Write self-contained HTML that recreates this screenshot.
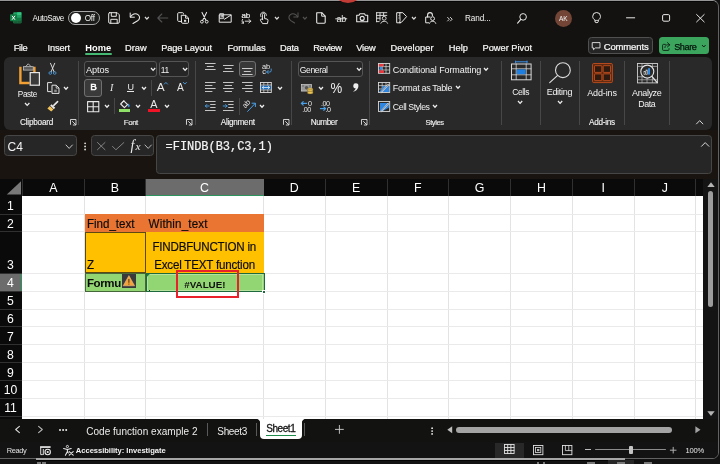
<!DOCTYPE html>
<html>
<head>
<meta charset="utf-8">
<title>Excel</title>
<style>
html,body{margin:0;padding:0;}
body{width:720px;height:464px;overflow:hidden;background:#111;font-family:"Liberation Sans",sans-serif;position:relative;color:#fff;}
#win{position:absolute;left:-8px;top:0;width:727px;height:458.6px;background:#131210;border:1px solid #626262;border-right-width:1.6px;border-top-color:#969696;border-radius:6.5px;box-sizing:border-box;overflow:hidden;}
#w{position:absolute;left:7px;top:-1px;width:720px;height:464px;will-change:transform;}
.a{position:absolute;}
.t{position:absolute;white-space:nowrap;line-height:1;color:#fff;}
svg{position:absolute;overflow:visible;}
</style>
</head>
<body>
<div id="win"><div id="w">
<!--title-->
<div class="a" style="left:0px;top:1px;width:718px;height:0.8px;background:#060606"></div>
<svg style="left:9.5px;top:12.3px" width="11.6" height="11.4" viewBox="0 0 11.6 11.4" ><rect x="3.2" y="0.2" width="8.2" height="11" rx="0.9" fill="#21a366"/><rect x="7.2" y="0.2" width="4.2" height="2.8" fill="#33c481"/><rect x="7.2" y="3" width="4.2" height="2.7" fill="#21a366"/><rect x="7.2" y="5.7" width="4.2" height="2.7" fill="#107c41"/><rect x="3.2" y="5.7" width="4" height="5.5" fill="#185c37"/><rect x="7.2" y="8.4" width="4.2" height="2.8" fill="#185c37"/><rect x="0" y="2.3" width="7" height="7" rx="0.7" fill="#107c41"/><path d="M2 3.8L5 7.8M5 3.8L2 7.8" stroke="#fff" stroke-width="1" fill="none"/></svg>
<div class="t" style="left:32.50px;top:15.00px;font-size:8.14px;color:#f6f6f6;letter-spacing:-0.500px;">AutoSave</div>
<div class="a" style="left:68.4px;top:10.8px;width:31.7px;height:14.7px;border:1px solid #a8a8a8;border-radius:8px;box-sizing:border-box;background:#1c1c1a"></div>
<div class="a" style="left:70.9px;top:12.9px;width:10.4px;height:10.4px;background:#fff;border-radius:6px"></div>
<div class="t" style="left:84.80px;top:15.00px;font-size:8.2px;color:#f2f2f2;letter-spacing:-0.291px;">Off</div>
<svg style="left:108px;top:12px" width="12" height="12" viewBox="0 0 12 12" ><path d="M1.5 0.7H9.2L11.3 2.8V10A1.3 1.3 0 0 1 10 11.3H2A1.3 1.3 0 0 1 0.7 10V1.5A0.8 0.8 0 0 1 1.5 0.7Z" fill="none" stroke="#e8e8e8" stroke-width="1" stroke-linecap="round" stroke-linejoin="round" /><path d="M3.3 0.9V4.3H8.3V0.9" fill="none" stroke="#e8e8e8" stroke-width="1" stroke-linecap="round" stroke-linejoin="round" /><path d="M2.8 11.2V7.3H9.2V11.2" fill="none" stroke="#e8e8e8" stroke-width="1" stroke-linecap="round" stroke-linejoin="round" /></svg>
<svg style="left:129px;top:12px" width="12" height="12" viewBox="0 0 12 12" ><path d="M1.2 1V5.2H5.4" fill="none" stroke="#e8e8e8" stroke-width="1" stroke-linecap="round" stroke-linejoin="round" /><path d="M1.4 5.1C3 2.2 6.5 0.8 9 2.6C11.3 4.3 11 7.2 8.6 8.8L4 11.5" fill="none" stroke="#e8e8e8" stroke-width="1.1" stroke-linecap="round" stroke-linejoin="round" /></svg>
<svg style="left:143.71px;top:15.95px" width="5.78" height="4.1"><path d="M1 1L2.89 3.1L4.78 1" fill="none" stroke="#ddd" stroke-width="1.25" stroke-linecap="butt" stroke-linejoin="miter"/></svg>
<svg style="left:157px;top:13px" width="12" height="10" viewBox="0 0 12 10" ><path d="M0.8 5H10.8M4.8 1L0.8 5L4.8 9" fill="none" stroke="#525252" stroke-width="1.1" stroke-linecap="round" stroke-linejoin="round" /></svg>
<svg style="left:177px;top:12px" width="13" height="12" viewBox="0 0 13 12" ><path d="M6.5 2V1.6A1 1 0 0 0 5.5 0.7H1.6A1 1 0 0 0 0.7 1.6V8.5A1 1 0 0 0 1.6 9.4H4" fill="none" stroke="#e8e8e8" stroke-width="1" stroke-linecap="round" stroke-linejoin="round" /><path d="M4.6 3.3H8.7L11.5 6V10.4A1 1 0 0 1 10.5 11.3H5.5A1 1 0 0 1 4.6 10.4Z" fill="none" stroke="#e8e8e8" stroke-width="1" stroke-linecap="round" stroke-linejoin="round" /><path d="M8.6 3.4V6.2H11.3" fill="none" stroke="#e8e8e8" stroke-width="1" stroke-linecap="round" stroke-linejoin="round" /><rect x="7" y="7.8" width="2.2" height="2" fill="#ddd"/></svg>
<svg style="left:199.6px;top:12.4px" width="8.6" height="12" viewBox="0 0 8.6 12" ><path d="M2 0.4L5.9 8.2M6.6 0.4L2.7 8.2" fill="none" stroke="#e8e8e8" stroke-width="1.05" stroke-linecap="round" stroke-linejoin="round" /><circle cx="1.9" cy="9.7" r="1.4" fill="none" stroke="#e8e8e8" stroke-width="0.95"/><circle cx="6.7" cy="9.7" r="1.4" fill="none" stroke="#e8e8e8" stroke-width="0.95"/></svg>
<svg style="left:218.7px;top:12.6px" width="13" height="10" viewBox="0 0 13 10" ><path d="M0.6 1.8H12.2V9.2H0.6Z" fill="none" stroke="#e8e8e8" stroke-width="1" stroke-linecap="round" stroke-linejoin="round" /><path d="M11.8 2.2L5.5 6.2" fill="none" stroke="#e8e8e8" stroke-width="1" stroke-linecap="round" stroke-linejoin="round" /><path d="M1.2 0.6H4.6V5.6H1.2Z M2.3 2.2V4.2M3.5 2.2V4.2" fill="none" stroke="#e8e8e8" stroke-width="0.8" stroke-linecap="round" stroke-linejoin="round" /></svg>
<svg style="left:240.5px;top:12.3px" width="11" height="12" viewBox="0 0 11 12" ><text x="0.4" y="5.8" style="font-family:'Liberation Sans',sans-serif;font-size:8px;letter-spacing:-0.2px" fill="#ececec" stroke="#ececec" stroke-width="0.2">ab</text><path d="M1.6 7.3C0.6 8.6 0.9 10.2 2.4 11M2.4 11L0.9 11.2M2.4 11L2.3 9.6" fill="none" stroke="#e8e8e8" stroke-width="0.9" stroke-linecap="round" stroke-linejoin="round" /><path d="M4.2 9.2H9.8M7.8 7.4L9.9 9.2L7.8 11" fill="none" stroke="#e8e8e8" stroke-width="0.9" stroke-linecap="round" stroke-linejoin="round" /></svg>
<svg style="left:259px;top:12px" width="10" height="12.5" viewBox="0 0 10 12.5" ><path d="M3.4 5.6V2.4A1.1 1.1 0 0 1 5.6 2.4V6.5L8 7.1A1.3 1.3 0 0 1 9 8.6L8.4 11.6H3.6L1.4 8.2A0.9 0.9 0 0 1 2.8 7.2L3.4 7.8Z" fill="none" stroke="#e8e8e8" stroke-width="1" stroke-linecap="round" stroke-linejoin="round" /><path d="M1.8 4.6A3 3 0 1 1 7.4 3.4" fill="none" stroke="#e8e8e8" stroke-width="0.9" stroke-linecap="round" stroke-linejoin="round" /></svg>
<svg style="left:273.61px;top:15.95px" width="5.78" height="4.1"><path d="M1 1L2.89 3.1L4.78 1" fill="none" stroke="#ddd" stroke-width="1.25" stroke-linecap="butt" stroke-linejoin="miter"/></svg>
<svg style="left:287.5px;top:12.3px" width="11" height="12" viewBox="0 0 11 12" ><path d="M10 0.8V5H5.8" fill="none" stroke="#525252" stroke-width="1" stroke-linecap="round" stroke-linejoin="round" /><path d="M9.8 4.9C8.2 2 4.7 0.8 2.4 2.6C0.2 4.3 0.5 7 2.8 8.6L6.6 11" fill="none" stroke="#525252" stroke-width="1.1" stroke-linecap="round" stroke-linejoin="round" /></svg>
<svg style="left:302.11px;top:15.95px" width="5.78" height="4.1"><path d="M1 1L2.89 3.1L4.78 1" fill="none" stroke="#525252" stroke-width="1.25" stroke-linecap="butt" stroke-linejoin="miter"/></svg>
<svg style="left:315.6px;top:12.3px" width="10" height="12" viewBox="0 0 10 12" ><path d="M0.7 0.7H5.8L9.2 4.1V10.3A0.9 0.9 0 0 1 8.3 11.2H1.6A0.9 0.9 0 0 1 0.7 10.3Z" fill="none" stroke="#e8e8e8" stroke-width="1.1" stroke-linecap="round" stroke-linejoin="round" /><path d="M5.7 0.9V4.2H9" fill="none" stroke="#e8e8e8" stroke-width="1" stroke-linecap="round" stroke-linejoin="round" /></svg>
<svg style="left:334.6px;top:14px" width="13" height="9" viewBox="0 0 13 9" ><text x="1.5" y="7.6" style="font-family:'Liberation Sans',sans-serif;font-size:9px;letter-spacing:-0.2px" fill="#ececec">ab</text><path d="M0.3 4.8H12.2" stroke="#ececec" stroke-width="0.9"/></svg>
<svg style="left:355.5px;top:13px" width="12.5" height="9.6" viewBox="0 0 12.5 9.6" ><path d="M0.7 2.3H3L3.9 0.7H8.5L9.4 2.3H11.7V8.8H0.7Z" fill="none" stroke="#e8e8e8" stroke-width="1.1" stroke-linecap="round" stroke-linejoin="round" /><circle cx="6.2" cy="5.4" r="2" fill="none" stroke="#e8e8e8" stroke-width="1.1"/></svg>
<svg style="left:376.2px;top:12.3px" width="12" height="11.5" viewBox="0 0 12 11.5" ><path d="M0.6 0.7H10.8M0.6 0.7V9.8M0.6 3.4H10.8M0.6 6.2H4M0.6 9.6H3.2M4 0.9V8.2M7.6 0.9V3.4" fill="none" stroke="#e8e8e8" stroke-width="0.9" stroke-linecap="round" stroke-linejoin="round" /><circle cx="8.2" cy="6.3" r="1.9" fill="#131210" stroke="#e8e8e8" stroke-width="0.9"/><path d="M4.8 11.2C5.2 8.6 11.2 8.6 11.6 11.2" fill="none" stroke="#e8e8e8" stroke-width="0.9" stroke-linecap="round" stroke-linejoin="round" /></svg>
<svg style="left:395.5px;top:12.3px" width="11.5" height="11.5" viewBox="0 0 11.5 11.5" ><path d="M4.2 0.7H0.7V10.8H4.5" fill="none" stroke="#e8e8e8" stroke-width="1" stroke-linecap="round" stroke-linejoin="round" /><path d="M4.2 0.7H6.8L10.6 4.6L5.6 10.2L3.6 10.8L4 8.8Z" fill="none" stroke="#e8e8e8" stroke-width="1" stroke-linecap="round" stroke-linejoin="round" /><path d="M3 3.6V3.7M3 6V6.1" fill="none" stroke="#e8e8e8" stroke-width="1" stroke-linecap="round" stroke-linejoin="round" /></svg>
<svg style="left:410.51px;top:15.95px" width="5.78" height="4.1"><path d="M1 1L2.89 3.1L4.78 1" fill="none" stroke="#ddd" stroke-width="1.25" stroke-linecap="butt" stroke-linejoin="miter"/></svg>
<svg style="left:424.5px;top:12px" width="11.5" height="11.5" viewBox="0 0 11.5 11.5" ><path d="M2.6 5V3A2.4 2.4 0 0 1 7.4 3V3.4" fill="none" stroke="#e8e8e8" stroke-width="1.1" stroke-linecap="round" stroke-linejoin="round" /><path d="M5 5H0.7V10.8H3.6" fill="none" stroke="#e8e8e8" stroke-width="1" stroke-linecap="round" stroke-linejoin="round" /><circle cx="7.6" cy="6.6" r="1.9" fill="none" stroke="#e8e8e8" stroke-width="1"/><path d="M4.4 11.3C4.8 8.6 10.4 8.6 10.8 11.3" fill="none" stroke="#e8e8e8" stroke-width="1" stroke-linecap="round" stroke-linejoin="round" /></svg>
<svg style="left:447.3px;top:17px" width="6" height="4.5" viewBox="0 0 6 4.5" ><path d="M0.6 0.4L2.4 2.2L0.6 4M3.4 0.4L5.2 2.2L3.4 4" fill="none" stroke="#e8e8e8" stroke-width="0.9" stroke-linecap="round" stroke-linejoin="round" /></svg>
<div class="t" style="left:465.00px;top:15.00px;font-size:8.2px;color:#f2f2f2;letter-spacing:-0.118px;">Rand...</div>
<svg style="left:517.3px;top:13px" width="10" height="11" viewBox="0 0 10 11" ><circle cx="6.1" cy="3.9" r="3.3" fill="none" stroke="#e8e8e8" stroke-width="1"/><path d="M3.8 6.4L0.6 10.2" fill="none" stroke="#e8e8e8" stroke-width="1.1" stroke-linecap="round" stroke-linejoin="round" /></svg>
<div class="a" style="left:554.6px;top:9.5px;width:17.4px;height:17.4px;background:#724536;border-radius:9px"></div>
<div class="t" style="left:558.90px;top:16.00px;font-size:6.5px;color:#f4f4f4;">AK</div>
<svg style="left:592px;top:12.3px" width="9.5" height="11.6" viewBox="0 0 9.5 11.6" ><path d="M2.9 8.2C1.4 7 0.7 5.8 0.7 4.4A3.9 3.9 0 0 1 8.5 4.4C8.5 5.8 7.8 7 6.3 8.2V9.4A1.2 1.2 0 0 1 5.1 10.6H4.1A1.2 1.2 0 0 1 2.9 9.4Z" fill="none" stroke="#e8e8e8" stroke-width="1" stroke-linecap="round" stroke-linejoin="round" /><path d="M3 8.4H6.2" fill="none" stroke="#e8e8e8" stroke-width="0.8" stroke-linecap="round" stroke-linejoin="round" /></svg>
<svg style="left:626px;top:17px" width="9.5" height="2" viewBox="0 0 9.5 2" ><path d="M0.5 0.8H8.7" fill="none" stroke="#e8e8e8" stroke-width="1" stroke-linecap="round" stroke-linejoin="round" /></svg>
<svg style="left:661.5px;top:14.2px" width="8.5" height="8" viewBox="0 0 8.5 8" ><rect x="0.6" y="0.6" width="7" height="6.6" rx="1.3" fill="none" stroke="#e8e8e8" stroke-width="1"/></svg>
<svg style="left:696px;top:14px" width="9" height="8.5" viewBox="0 0 9 8.5" ><path d="M0.6 0.5L8.2 7.9M8.2 0.5L0.6 7.9" fill="none" stroke="#e8e8e8" stroke-width="1" stroke-linecap="round" stroke-linejoin="round" /></svg>
<!--menu-->
<div class="t" style="left:13.70px;top:44.00px;font-size:9.3px;color:#f6f6f6;letter-spacing:-0.295px;-webkit-text-stroke:0.22px #f6f6f6;">File</div>
<div class="t" style="left:47.50px;top:44.00px;font-size:9.3px;color:#f6f6f6;letter-spacing:-0.153px;-webkit-text-stroke:0.22px #f6f6f6;">Insert</div>
<div class="t" style="left:125.00px;top:44.00px;font-size:9.3px;color:#f6f6f6;-webkit-text-stroke:0.22px #f6f6f6;">Draw</div>
<div class="t" style="left:161.20px;top:44.00px;font-size:9.3px;color:#f6f6f6;letter-spacing:-0.142px;-webkit-text-stroke:0.22px #f6f6f6;">Page Layout</div>
<div class="t" style="left:227.50px;top:44.00px;font-size:9.3px;color:#f6f6f6;letter-spacing:-0.079px;-webkit-text-stroke:0.22px #f6f6f6;">Formulas</div>
<div class="t" style="left:280.00px;top:44.00px;font-size:9.3px;color:#f6f6f6;letter-spacing:-0.214px;-webkit-text-stroke:0.22px #f6f6f6;">Data</div>
<div class="t" style="left:313.20px;top:44.00px;font-size:9.3px;color:#f6f6f6;letter-spacing:-0.337px;-webkit-text-stroke:0.22px #f6f6f6;">Review</div>
<div class="t" style="left:356.20px;top:44.00px;font-size:9.3px;color:#f6f6f6;letter-spacing:-0.161px;-webkit-text-stroke:0.22px #f6f6f6;">View</div>
<div class="t" style="left:390.50px;top:44.00px;font-size:9.3px;color:#f6f6f6;letter-spacing:0.101px;-webkit-text-stroke:0.22px #f6f6f6;">Developer</div>
<div class="t" style="left:448.70px;top:44.00px;font-size:9.3px;color:#f6f6f6;letter-spacing:0.058px;-webkit-text-stroke:0.22px #f6f6f6;">Help</div>
<div class="t" style="left:482.50px;top:44.00px;font-size:9.3px;color:#f6f6f6;letter-spacing:-0.011px;-webkit-text-stroke:0.22px #f6f6f6;">Power Pivot</div>
<div class="t" style="left:85.30px;top:44.00px;font-size:9.3px;color:#fff;letter-spacing:0.052px;font-weight:bold;">Home</div>
<div class="a" style="left:85.3px;top:53px;width:26.3px;height:1.8px;background:#45b873;border-radius:1px"></div>
<div class="a" style="left:588.2px;top:37.2px;width:64.5px;height:17.2px;background:#252525;border:1px solid #505050;border-radius:3.5px;box-sizing:border-box"></div>
<svg style="left:592px;top:42.3px" width="8.6" height="8.4" viewBox="0 0 8.6 8.4" ><path d="M0.6 0.6H8V5.9H3.4L1.5 7.7V5.9H0.6Z" fill="none" stroke="#e8e8e8" stroke-width="0.9" stroke-linecap="round" stroke-linejoin="round" stroke-linejoin="miter"/></svg>
<div class="t" style="left:603.70px;top:42.00px;font-size:9.5px;color:#f8f8f8;letter-spacing:-0.134px;-webkit-text-stroke:0.22px #f8f8f8;">Comments</div>
<div class="a" style="left:658.7px;top:37.2px;width:50.6px;height:17.2px;background:#3ba55d;border-radius:3.5px"></div>
<svg style="left:662px;top:42px" width="8.6" height="9" viewBox="0 0 8.6 9" ><path d="M3.4 2.4H1.4A0.8 0.8 0 0 0 0.6 3.2V7.6A0.8 0.8 0 0 0 1.4 8.4H6.2A0.8 0.8 0 0 0 7 7.6V6.6" fill="none" stroke="#0d1f14" stroke-width="0.9" stroke-linecap="round" stroke-linejoin="round" /><path d="M5.4 0.6L7.9 2.8L5.4 5M7.7 2.8H5.6C4 2.8 3 3.8 2.9 5.6" fill="none" stroke="#0d1f14" stroke-width="0.9" stroke-linecap="round" stroke-linejoin="round" /></svg>
<div class="t" style="left:674.20px;top:43.00px;font-size:9.14px;color:#07140c;letter-spacing:-0.400px;-webkit-text-stroke:0.25px #07140c;">Share</div>
<svg style="left:701.015px;top:44.2025px" width="5.57" height="3.995"><path d="M1 1L2.785 2.995L4.57 1" fill="none" stroke="#07140c" stroke-width="0.9" stroke-linecap="butt" stroke-linejoin="miter"/></svg>
<!--ribbon-->
<div class="a" style="left:3.6px;top:57.3px;width:708.6px;height:72.8px;background:#292929;border-radius:6px"></div>
<div class="a" style="left:78.1px;top:61px;width:1px;height:64px;background:#474747"></div>
<div class="a" style="left:194.9px;top:61px;width:1px;height:64px;background:#474747"></div>
<div class="a" style="left:291.1px;top:61px;width:1px;height:64px;background:#474747"></div>
<div class="a" style="left:368.8px;top:61px;width:1px;height:64px;background:#474747"></div>
<div class="a" style="left:500.8px;top:61px;width:1px;height:64px;background:#474747"></div>
<div class="a" style="left:539.9px;top:61px;width:1px;height:64px;background:#474747"></div>
<div class="a" style="left:579.0px;top:61px;width:1px;height:64px;background:#474747"></div>
<div class="a" style="left:623.8px;top:61px;width:1px;height:64px;background:#474747"></div>
<div class="a" style="left:668.9px;top:61px;width:1px;height:64px;background:#474747"></div>
<svg style="left:18.5px;top:62.8px" width="21.5" height="23" viewBox="0 0 21.5 23" ><path d="M1.4 3.8V20H10.6M15.4 3.8V9" fill="none" stroke="#f2a033" stroke-width="2.4" stroke-linejoin="miter"/><rect x="4.4" y="3.7" width="9.8" height="3.4" fill="#5a5a5a" stroke="#d0d0d0" stroke-width="0.7"/><path d="M6.6 3.6L9.3 0.8L12 3.6" fill="none" stroke="#d8d8d8" stroke-width="0.8"/><rect x="11.2" y="9.6" width="9.2" height="12.6" fill="#3a3a3a" stroke="#e6e6e6" stroke-width="1.2"/></svg>
<div class="t" style="left:17.80px;top:91.00px;font-size:8.22px;color:#f4f4f4;letter-spacing:-0.400px;">Paste</div>
<svg style="left:23.895000000000003px;top:102.2925px" width="6.41" height="4.415"><path d="M1 1L3.205 3.415L5.41 1" fill="none" stroke="#eee" stroke-width="1.25" stroke-linecap="butt" stroke-linejoin="miter"/></svg>
<svg style="left:49px;top:63.2px" width="7.6" height="12" viewBox="0 0 7.6 12" ><path d="M1.5 0.3L5.1 8.8M5.7 0.3L2.1 8.8" fill="none" stroke="#e8e8e8" stroke-width="0.9" stroke-linecap="round" stroke-linejoin="round" /><circle cx="1.3" cy="10" r="1.35" fill="none" stroke="#4aa0e6" stroke-width="0.8"/><circle cx="5.7" cy="10" r="1.35" fill="none" stroke="#4aa0e6" stroke-width="0.8"/></svg>
<svg style="left:46.6px;top:82px" width="12.6" height="12" viewBox="0 0 12.6 12" ><path d="M5 0.6H0.6V9.6H4.4" fill="none" stroke="#e4e4e4" stroke-width="1"/><path d="M5 3.2H9.2L12 6V11.4H5Z" fill="#2b2b2b" stroke="#e4e4e4" stroke-width="1" stroke-linejoin="miter"/><path d="M9.2 3.4V6.1H11.8" fill="none" stroke="#e4e4e4" stroke-width="0.8"/><rect x="7.2" y="7.6" width="2.6" height="2.4" fill="#8a8a8a"/></svg>
<svg style="left:62.90500000000001px;top:85.5975px" width="5.99" height="4.205"><path d="M1 1L2.995 3.205L4.99 1" fill="none" stroke="#eee" stroke-width="1.25" stroke-linecap="butt" stroke-linejoin="miter"/></svg>
<svg style="left:47px;top:100.8px" width="11.6" height="10.8" viewBox="0 0 11.6 10.8" ><path d="M10.6 0.6L6.8 4.4" fill="none" stroke="#e8e8e8" stroke-width="1.6" stroke-linecap="round" stroke-linejoin="round" /><path d="M4.6 3.2L8.2 6.8L6.8 8.2L3.2 4.6Z" fill="#e8e8e8"/><path d="M2.8 5L6.4 8.6L4.2 10.4L0.4 7.4Z" fill="#f3c35a"/></svg>
<div class="t" style="left:20.00px;top:119.00px;font-size:8.2px;color:#f2f2f2;letter-spacing:-0.218px;-webkit-text-stroke:0.12px #f2f2f2;">Clipboard</div>
<svg style="left:69.6px;top:118.9px" width="6.6" height="6.6" viewBox="0 0 6.6 6.6" ><path d="M0.5 5.4V0.5H6V2.4" fill="none" stroke="#e4e4e4" stroke-width="0.9" stroke-linecap="round" stroke-linejoin="round" /><path d="M2.5 2.5L5.6 5.6M6 3.3V6H3.3" fill="none" stroke="#e4e4e4" stroke-width="0.9" stroke-linecap="round" stroke-linejoin="round" /></svg>
<div class="a" style="left:84.3px;top:60.6px;width:72.5px;height:16.8px;border:1px solid #555;border-radius:3px;box-sizing:border-box;background:#262626"></div>
<div class="a" style="left:158.7px;top:60.6px;width:30.8px;height:16.8px;border:1px solid #555;border-radius:3px;box-sizing:border-box;background:#262626"></div>
<div class="t" style="left:86.00px;top:66.00px;font-size:9.2px;color:#f2f2f2;letter-spacing:-0.075px;">Aptos</div>
<svg style="left:149.9px;top:67.045px" width="6.2" height="4.3100000000000005"><path d="M1 1L3.1 3.3100000000000005L5.2 1" fill="none" stroke="#eee" stroke-width="1.25" stroke-linecap="butt" stroke-linejoin="miter"/></svg>
<div class="t" style="left:160.80px;top:66.00px;font-size:8.47px;color:#f2f2f2;letter-spacing:-0.400px;">11</div>
<svg style="left:182.1px;top:67.045px" width="6.2" height="4.3100000000000005"><path d="M1 1L3.1 3.3100000000000005L5.2 1" fill="none" stroke="#eee" stroke-width="1.25" stroke-linecap="butt" stroke-linejoin="miter"/></svg>
<div class="a" style="left:84.3px;top:79.3px;width:17.5px;height:17.3px;border:1px solid #707070;border-radius:3px;box-sizing:border-box;background:#3a3a3a"></div>
<div class="t" style="left:90.30px;top:82.00px;font-size:9.8px;color:#fff;-webkit-text-stroke:0.45px #fff;">B</div>
<div class="t" style="left:110.00px;top:83.00px;font-size:10px;color:#e8e8e8;font-style:italic;font-family:'Liberation Serif',monospace;">I</div>
<div class="t" style="left:127.50px;top:83.00px;font-size:9px;color:#e8e8e8;">U</div>
<div class="a" style="left:127.3px;top:91.4px;width:6.6px;height:0.9px;background:#e8e8e8"></div>
<svg style="left:141.305px;top:85.5975px" width="5.99" height="4.205"><path d="M1 1L2.995 3.205L4.99 1" fill="none" stroke="#eee" stroke-width="1.25" stroke-linecap="butt" stroke-linejoin="miter"/></svg>
<div class="a" style="left:150.8px;top:79.5px;width:1px;height:16.5px;background:#474747"></div>
<div class="t" style="left:156.70px;top:82.00px;font-size:11.8px;color:#e8e8e8;">A</div>
<svg style="left:164.2px;top:82.3px" width="3.8" height="2.4" viewBox="0 0 3.8 2.4" ><path d="M0.3 2.1L1.9 0.4L3.5 2.1" fill="none" stroke="#4aa0e6" stroke-width="0.9" stroke-linecap="round" stroke-linejoin="round" /></svg>
<div class="t" style="left:177.00px;top:83.00px;font-size:10.2px;color:#e8e8e8;">A</div>
<svg style="left:183.2px;top:82.4px" width="3.8" height="2.6" viewBox="0 0 3.8 2.6" ><path d="M0.4 0.4L1.9 2.1L3.4 0.4" fill="none" stroke="#4aa0e6" stroke-width="0.9" stroke-linecap="round" stroke-linejoin="round" /></svg>
<svg style="left:86.6px;top:100.6px" width="12.4" height="11.4" viewBox="0 0 12.4 11.4" ><path d="M0.6 0.6H11.8V10.8H0.6ZM6.2 0.6V10.8M0.6 5.7H11.8" fill="none" stroke="#e8e8e8" stroke-width="1.1" stroke-linecap="round" stroke-linejoin="round" /></svg>
<svg style="left:104.005px;top:104.2975px" width="5.99" height="4.205"><path d="M1 1L2.995 3.205L4.99 1" fill="none" stroke="#eee" stroke-width="1.25" stroke-linecap="butt" stroke-linejoin="miter"/></svg>
<div class="a" style="left:113.8px;top:97.8px;width:1px;height:16.5px;background:#474747"></div>
<svg style="left:119.5px;top:100.4px" width="10.2" height="8.4" viewBox="0 0 10.2 8.4" ><path d="M3.8 0.8L7.6 4.6L4.4 7.6L0.7 4Z" fill="none" stroke="#e8e8e8" stroke-width="1.15" stroke-linecap="round" stroke-linejoin="round" /><path d="M2.2 2.6L3.8 0.6" fill="none" stroke="#e8e8e8" stroke-width="1" stroke-linecap="round" stroke-linejoin="round" /><path d="M8.6 4.2C8 5.4 8 6.6 8.8 6.8C9.6 6.6 9.4 5.4 8.6 4.2" fill="#4aa0e6" stroke="#4aa0e6" stroke-width="0.8" stroke-linecap="round" stroke-linejoin="round" /></svg>
<div class="a" style="left:118.8px;top:109.3px;width:11.2px;height:3px;background:#8fe066"></div>
<svg style="left:134.905px;top:104.2975px" width="5.99" height="4.205"><path d="M1 1L2.995 3.205L4.99 1" fill="none" stroke="#eee" stroke-width="1.25" stroke-linecap="butt" stroke-linejoin="miter"/></svg>
<div class="t" style="left:150.20px;top:99.00px;font-size:10.8px;color:#e8e8e8;">A</div>
<div class="a" style="left:148px;top:109.3px;width:11.7px;height:3px;background:#f01426"></div>
<svg style="left:164.405px;top:104.2975px" width="5.99" height="4.205"><path d="M1 1L2.995 3.205L4.99 1" fill="none" stroke="#eee" stroke-width="1.25" stroke-linecap="butt" stroke-linejoin="miter"/></svg>
<div class="t" style="left:123.80px;top:119.00px;font-size:7.93px;color:#f2f2f2;letter-spacing:-0.450px;-webkit-text-stroke:0.12px #f2f2f2;">Font</div>
<svg style="left:186.4px;top:118.9px" width="6.6" height="6.6" viewBox="0 0 6.6 6.6" ><path d="M0.5 5.4V0.5H6V2.4" fill="none" stroke="#e4e4e4" stroke-width="0.9" stroke-linecap="round" stroke-linejoin="round" /><path d="M2.5 2.5L5.6 5.6M6 3.3V6H3.3" fill="none" stroke="#e4e4e4" stroke-width="0.9" stroke-linecap="round" stroke-linejoin="round" /></svg>
<svg style="left:204.5px;top:60px" width="10.6" height="18" viewBox="0 0 10.6 18" ><path d="M0 3.5H10.6" stroke="#f0f0f0" stroke-width="0.8"/><path d="M1.8 6.5H8.799999999999999" stroke="#f0f0f0" stroke-width="0.8"/><path d="M0 9.5H10.6" stroke="#f0f0f0" stroke-width="0.8"/></svg>
<svg style="left:223.2px;top:60px" width="10.6" height="18" viewBox="0 0 10.6 18" ><path d="M0 5.5H10.6" stroke="#f0f0f0" stroke-width="0.8"/><path d="M1.8 8.5H8.799999999999999" stroke="#f0f0f0" stroke-width="0.8"/><path d="M0 11.5H10.6" stroke="#f0f0f0" stroke-width="0.8"/></svg>
<div class="a" style="left:239px;top:60.5px;width:16.8px;height:16.8px;border:1px solid #707070;border-radius:3px;box-sizing:border-box;background:#383838"></div>
<svg style="left:242.1px;top:60px" width="10.6" height="18" viewBox="0 0 10.6 18" ><path d="M0 8.5H10.6" stroke="#f0f0f0" stroke-width="0.8"/><path d="M1.8 11.5H8.799999999999999" stroke="#f0f0f0" stroke-width="0.8"/><path d="M0 14.5H10.6" stroke="#f0f0f0" stroke-width="0.8"/></svg>
<svg style="left:262px;top:62.6px" width="10" height="12" viewBox="0 0 10 12" ><text x="0" y="5.8" style="font-family:'Liberation Sans',sans-serif;font-size:7.4px" fill="#eaeaea">ab</text><text x="0.2" y="11" style="font-family:'Liberation Sans',sans-serif;font-size:7.4px" fill="#eaeaea">c</text><path d="M9.2 6V7.6A1.4 1.4 0 0 1 7.8 9H4.8M6.2 7.4L4.6 9L6.2 10.6" fill="none" stroke="#4aa0e6" stroke-width="0.9" stroke-linecap="round" stroke-linejoin="round" /></svg>
<svg style="left:204.5px;top:60px" width="10.6" height="34" viewBox="0 0 10.6 34" ><path d="M0 22.5H10.6" stroke="#f0f0f0" stroke-width="0.8"/><path d="M0 25.5H7.3999999999999995" stroke="#f0f0f0" stroke-width="0.8"/><path d="M0 28.5H10.6" stroke="#f0f0f0" stroke-width="0.8"/><path d="M0 31.5H7.3999999999999995" stroke="#f0f0f0" stroke-width="0.8"/></svg>
<svg style="left:223.2px;top:60px" width="10.6" height="34" viewBox="0 0 10.6 34" ><path d="M0 22.5H10.6" stroke="#f0f0f0" stroke-width="0.8"/><path d="M1.6 25.5H9.0" stroke="#f0f0f0" stroke-width="0.8"/><path d="M0 28.5H10.6" stroke="#f0f0f0" stroke-width="0.8"/><path d="M1.6 31.5H9.0" stroke="#f0f0f0" stroke-width="0.8"/></svg>
<svg style="left:242.1px;top:60px" width="10.6" height="34" viewBox="0 0 10.6 34" ><path d="M0 22.5H10.6" stroke="#f0f0f0" stroke-width="0.8"/><path d="M3.2 25.5H10.6" stroke="#f0f0f0" stroke-width="0.8"/><path d="M0 28.5H10.6" stroke="#f0f0f0" stroke-width="0.8"/><path d="M3.2 31.5H10.6" stroke="#f0f0f0" stroke-width="0.8"/></svg>
<svg style="left:260px;top:81.8px" width="11.8" height="11" viewBox="0 0 11.8 11" ><rect x="0.5" y="0.5" width="10.8" height="10" fill="none" stroke="#e0e0e0" stroke-width="0.9"/><rect x="1" y="3.5" width="9.8" height="4" fill="#1d6fc0"/><path d="M0.6 3H11.2M0.6 8H11.2M3.8 0.6V3M7.8 0.6V3M3.8 8V10.4M7.8 8V10.4" fill="none" stroke="#e0e0e0" stroke-width="0.7" stroke-linecap="round" stroke-linejoin="round" /><path d="M2.4 5.5H9.4M3.6 4.3L2.3 5.5L3.6 6.7M8.2 4.3L9.5 5.5L8.2 6.7" fill="none" stroke="#dff0ff" stroke-width="0.8" stroke-linecap="round" stroke-linejoin="round" /></svg>
<svg style="left:276.905px;top:85.5975px" width="5.99" height="4.205"><path d="M1 1L2.995 3.205L4.99 1" fill="none" stroke="#eee" stroke-width="1.25" stroke-linecap="butt" stroke-linejoin="miter"/></svg>
<svg style="left:204.5px;top:100px" width="10.6" height="11.4" viewBox="0 0 10.6 11.4" ><path d="M0 1.5H10.6" stroke="#f0f0f0" stroke-width="0.8"/><path d="M5.2 4.5H10.6" stroke="#f0f0f0" stroke-width="0.8"/><path d="M5.2 7.5H10.6" stroke="#f0f0f0" stroke-width="0.8"/><path d="M0 10.5H10.6" stroke="#f0f0f0" stroke-width="0.8"/><path d="M0.4 6H4.2M1.8 4.5L0.3 6L1.8 7.5" fill="none" stroke="#4aa0e6" stroke-width="0.9" stroke-linecap="round" stroke-linejoin="round" /></svg>
<svg style="left:223.2px;top:100px" width="10.6" height="11.4" viewBox="0 0 10.6 11.4" ><path d="M0 1.5H10.6" stroke="#f0f0f0" stroke-width="0.8"/><path d="M5.2 4.5H10.6" stroke="#f0f0f0" stroke-width="0.8"/><path d="M5.2 7.5H10.6" stroke="#f0f0f0" stroke-width="0.8"/><path d="M0 10.5H10.6" stroke="#f0f0f0" stroke-width="0.8"/><path d="M0.2 6H4M2.6 4.5L4.1 6L2.6 7.5" fill="none" stroke="#4aa0e6" stroke-width="0.9" stroke-linecap="round" stroke-linejoin="round" /></svg>
<div class="a" style="left:238.8px;top:98px;width:1px;height:16.5px;background:#474747"></div>
<svg style="left:242.6px;top:100px" width="13" height="12" viewBox="0 0 13 12" ><text transform="translate(2.6,8.6) rotate(-50)" style="font-family:'Liberation Sans',sans-serif;font-size:7.4px" fill="#eaeaea">ab</text><path d="M4.6 11.4L12.2 3.4M9 3.2H12.4V6.6" fill="none" stroke="#4aa0e6" stroke-width="1" stroke-linecap="round" stroke-linejoin="round" /></svg>
<svg style="left:258.605px;top:104.2975px" width="5.99" height="4.205"><path d="M1 1L2.995 3.205L4.99 1" fill="none" stroke="#eee" stroke-width="1.25" stroke-linecap="butt" stroke-linejoin="miter"/></svg>
<div class="t" style="left:220.70px;top:119.00px;font-size:8.2px;color:#f2f2f2;letter-spacing:-0.265px;-webkit-text-stroke:0.12px #f2f2f2;">Alignment</div>
<svg style="left:283.4px;top:118.9px" width="6.6" height="6.6" viewBox="0 0 6.6 6.6" ><path d="M0.5 5.4V0.5H6V2.4" fill="none" stroke="#e4e4e4" stroke-width="0.9" stroke-linecap="round" stroke-linejoin="round" /><path d="M2.5 2.5L5.6 5.6M6 3.3V6H3.3" fill="none" stroke="#e4e4e4" stroke-width="0.9" stroke-linecap="round" stroke-linejoin="round" /></svg>
<div class="a" style="left:298.3px;top:60.6px;width:65.2px;height:16.8px;border:1px solid #555;border-radius:3px;box-sizing:border-box;background:#262626"></div>
<div class="t" style="left:299.80px;top:66.00px;font-size:8.61px;color:#f2f2f2;letter-spacing:-0.400px;">General</div>
<svg style="left:356.2px;top:67.045px" width="6.2" height="4.3100000000000005"><path d="M1 1L3.1 3.3100000000000005L5.2 1" fill="none" stroke="#eee" stroke-width="1.25" stroke-linecap="butt" stroke-linejoin="miter"/></svg>
<svg style="left:301px;top:84px" width="12.6" height="10.4" viewBox="0 0 12.6 10.4" ><rect x="0.5" y="0.5" width="10" height="6.6" fill="#9a9a9a" stroke="#e0e0e0" stroke-width="0.6"/><circle cx="5.5" cy="3.8" r="1.7" fill="#555"/><rect x="1.4" y="1.4" width="1.2" height="1.2" fill="#555"/><rect x="8.4" y="1.4" width="1.2" height="1.2" fill="#555"/><ellipse cx="9.2" cy="5.2" rx="3" ry="1.3" fill="#f0c85a" stroke="#5a4a10" stroke-width="0.4"/><ellipse cx="9.2" cy="7" rx="3" ry="1.3" fill="#f0c85a" stroke="#5a4a10" stroke-width="0.4"/><ellipse cx="9.2" cy="8.8" rx="3" ry="1.3" fill="#f0c85a" stroke="#5a4a10" stroke-width="0.4"/></svg>
<svg style="left:317.505px;top:85.5975px" width="5.99" height="4.205"><path d="M1 1L2.995 3.205L4.99 1" fill="none" stroke="#eee" stroke-width="1.25" stroke-linecap="butt" stroke-linejoin="miter"/></svg>
<div class="t" style="left:330.60px;top:82.00px;font-size:13.2px;color:#ededed;transform:scaleY(1.16);transform-origin:50% 85%;">%</div>
<svg style="left:352.2px;top:83.4px" width="6.6" height="9" viewBox="0 0 6.6 9" ><path d="M3.9 0.2A2.5 2.5 0 0 1 6.4 2.9C6.4 5.6 4.2 8 0.8 8.8C2.5 7.7 3.6 6.4 3.7 5.3A2.55 2.55 0 0 1 3.9 0.2Z" fill="#ededed"/></svg>
<svg style="left:301px;top:100.4px" width="12" height="11.8" viewBox="0 0 12 11.8" ><path d="M0.4 3.4H5.6M2.2 1.6L0.3 3.4L2.2 5.2" fill="none" stroke="#4aa0e6" stroke-width="1.1" stroke-linecap="round" stroke-linejoin="round" /><text x="7" y="5.6" style="font-family:'Liberation Sans',sans-serif;font-size:7.2px;letter-spacing:-0.5px" fill="#e8e8e8">0</text><text x="1.2" y="11.7" style="font-family:'Liberation Sans',sans-serif;font-size:7.2px;letter-spacing:-0.5px" fill="#e8e8e8">.00</text></svg>
<svg style="left:319.6px;top:100.4px" width="12.4" height="11.8" viewBox="0 0 12.4 11.8" ><path d="M0.4 8.6H5.6M3.8 6.8L5.7 8.6L3.8 10.4" fill="none" stroke="#4aa0e6" stroke-width="1.1" stroke-linecap="round" stroke-linejoin="round" /><text x="1" y="5.6" style="font-family:'Liberation Sans',sans-serif;font-size:7.2px;letter-spacing:-0.5px" fill="#e8e8e8">.00</text><text x="5.4" y="11.7" style="font-family:'Liberation Sans',sans-serif;font-size:7.2px;letter-spacing:-0.5px" fill="#e8e8e8">.0</text></svg>
<div class="t" style="left:310.80px;top:119.00px;font-size:8.2px;color:#f2f2f2;letter-spacing:-0.445px;-webkit-text-stroke:0.12px #f2f2f2;">Number</div>
<svg style="left:360.6px;top:118.9px" width="6.6" height="6.6" viewBox="0 0 6.6 6.6" ><path d="M0.5 5.4V0.5H6V2.4" fill="none" stroke="#e4e4e4" stroke-width="0.9" stroke-linecap="round" stroke-linejoin="round" /><path d="M2.5 2.5L5.6 5.6M6 3.3V6H3.3" fill="none" stroke="#e4e4e4" stroke-width="0.9" stroke-linecap="round" stroke-linejoin="round" /></svg>
<svg style="left:378px;top:63.4px" width="12.2" height="10.8" viewBox="0 0 12.2 10.8" ><rect x="0.5" y="0.5" width="11.2" height="9.8" fill="none" stroke="#d8d8d8" stroke-width="0.9"/><path d="M0.6 3.6H11.6M0.6 7H11.6M4.2 0.6V10.2M8 0.6V10.2" fill="none" stroke="#d8d8d8" stroke-width="0.7" stroke-linecap="round" stroke-linejoin="round" /><rect x="1" y="1" width="3" height="2.4" fill="#e8373e"/><rect x="1.6" y="4" width="2.6" height="2.6" fill="#3a8ee6"/><rect x="1" y="7.4" width="5" height="2.6" fill="#e8373e"/><rect x="4.4" y="1" width="1.6" height="2.4" fill="#e8373e"/></svg>
<div class="t" style="left:392.80px;top:66.00px;font-size:9.0px;color:#f2f2f2;letter-spacing:-0.097px;">Conditional Formatting</div>
<svg style="left:483.305px;top:66.5975px" width="5.99" height="4.205"><path d="M1 1L2.995 3.205L4.99 1" fill="none" stroke="#eee" stroke-width="1.25" stroke-linecap="butt" stroke-linejoin="miter"/></svg>
<svg style="left:378px;top:82.2px" width="12.2" height="11" viewBox="0 0 12.2 11" ><rect x="0.5" y="0.5" width="11.2" height="10" fill="none" stroke="#d8d8d8" stroke-width="0.9"/><path d="M0.6 3.6H11.6M0.6 7H11.6M4.2 0.6V10.2M8 0.6V10.2" fill="none" stroke="#d8d8d8" stroke-width="0.7" stroke-linecap="round" stroke-linejoin="round" /><path d="M4.6 4H11.2V10H1L4.6 6Z" fill="#2f86e0"/><path d="M3 10.4L10.4 2.6" fill="none" stroke="#e8e8e8" stroke-width="1.5" stroke-linecap="round" stroke-linejoin="round" /><path d="M3 10.4L10.4 2.6" fill="none" stroke="#2b2b2b" stroke-width="0.5" stroke-linecap="round" stroke-linejoin="round" /></svg>
<div class="t" style="left:392.80px;top:84.00px;font-size:9.0px;color:#f2f2f2;letter-spacing:-0.334px;">Format as Table</div>
<svg style="left:454.605px;top:85.3975px" width="5.99" height="4.205"><path d="M1 1L2.995 3.205L4.99 1" fill="none" stroke="#eee" stroke-width="1.25" stroke-linecap="butt" stroke-linejoin="miter"/></svg>
<svg style="left:378px;top:101px" width="12.2" height="11" viewBox="0 0 12.2 11" ><rect x="0.5" y="0.5" width="11.2" height="10" fill="none" stroke="#d8d8d8" stroke-width="0.9"/><path d="M2 2H11V6.4L5 10H2Z" fill="#2f86e0"/><path d="M3 10.4L10.4 2.6" fill="none" stroke="#e8e8e8" stroke-width="1.5" stroke-linecap="round" stroke-linejoin="round" /><path d="M3 10.4L10.4 2.6" fill="none" stroke="#2b2b2b" stroke-width="0.5" stroke-linecap="round" stroke-linejoin="round" /></svg>
<div class="t" style="left:392.80px;top:103.00px;font-size:8.72px;color:#f2f2f2;letter-spacing:-0.400px;">Cell Styles</div>
<svg style="left:432.105px;top:104.0975px" width="5.99" height="4.205"><path d="M1 1L2.995 3.205L4.99 1" fill="none" stroke="#eee" stroke-width="1.25" stroke-linecap="butt" stroke-linejoin="miter"/></svg>
<div class="t" style="left:425.50px;top:119.00px;font-size:7.7px;color:#f2f2f2;letter-spacing:-0.450px;-webkit-text-stroke:0.12px #f2f2f2;">Styles</div>
<svg style="left:510.6px;top:61.3px" width="20.6" height="19.2" viewBox="0 0 20.6 19.2" ><path d="M4.6 0V1.8M16 0V1.8M4.6 0.8H16" fill="none" stroke="#3a8ee6" stroke-width="1" stroke-linecap="round" stroke-linejoin="round" /><rect x="0.5" y="3" width="19.6" height="15.8" fill="none" stroke="#d8d8d8" stroke-width="1"/><path d="M0.6 7.8H20M0.6 13.8H20M5.2 3V18.6M15.2 3V18.6" fill="none" stroke="#d8d8d8" stroke-width="0.8" stroke-linecap="round" stroke-linejoin="round" /><rect x="5.8" y="8.4" width="8.8" height="4.8" fill="#1f7fe0"/></svg>
<div class="t" style="left:512.20px;top:88.00px;font-size:8.5px;color:#f2f2f2;letter-spacing:-0.400px;">Cells</div>
<svg style="left:517.3px;top:100.045px" width="6.2" height="4.3100000000000005"><path d="M1 1L3.1 3.3100000000000005L5.2 1" fill="none" stroke="#eee" stroke-width="1.25" stroke-linecap="butt" stroke-linejoin="miter"/></svg>
<svg style="left:548.6px;top:62px" width="22" height="21.4" viewBox="0 0 22 21.4" ><circle cx="13.9" cy="8.2" r="7.4" fill="none" stroke="#dcdcdc" stroke-width="1.1"/><path d="M8.4 13.6L0.7 20.6" fill="none" stroke="#dcdcdc" stroke-width="1.2" stroke-linecap="round" stroke-linejoin="round" /></svg>
<div class="t" style="left:546.70px;top:88.00px;font-size:9.0px;color:#f2f2f2;letter-spacing:-0.289px;">Editing</div>
<svg style="left:556.5px;top:100.045px" width="6.2" height="4.3100000000000005"><path d="M1 1L3.1 3.3100000000000005L5.2 1" fill="none" stroke="#eee" stroke-width="1.25" stroke-linecap="butt" stroke-linejoin="miter"/></svg>
<svg style="left:592px;top:63.4px" width="20.8" height="20" viewBox="0 0 20.8 20" ><rect x="0.5" y="0.5" width="19.9" height="19.1" rx="1.2" fill="#5c2912" stroke="#c24e1d" stroke-width="0.9"/><rect x="2.5" y="2.7" width="7.3" height="6.7" rx="0.5" fill="#2f1a10" stroke="#d9561f" stroke-width="0.75"/><rect x="2.5" y="10.9" width="7.3" height="6.7" rx="0.5" fill="#2f1a10" stroke="#d9561f" stroke-width="0.75"/><rect x="11.2" y="2.7" width="7.3" height="6.7" rx="0.5" fill="#2f1a10" stroke="#d9561f" stroke-width="0.75"/><rect x="11.2" y="10.9" width="7.3" height="6.7" rx="0.5" fill="#2f1a10" stroke="#d9561f" stroke-width="0.75"/></svg>
<div class="t" style="left:587.20px;top:89.00px;font-size:9.0px;color:#f2f2f2;letter-spacing:-0.119px;">Add-ins</div>
<div class="t" style="left:589.10px;top:119.00px;font-size:8.2px;color:#f2f2f2;letter-spacing:-0.311px;-webkit-text-stroke:0.12px #f2f2f2;">Add-ins</div>
<svg style="left:637px;top:63.4px" width="21" height="20.4" viewBox="0 0 21 20.4" ><rect x="0.5" y="0.5" width="20" height="19.4" fill="none" stroke="#d0d0d0" stroke-width="0.9"/><path d="M0.6 3.4H20.4M0.6 13.8H7M0.6 16.8H20.4M5 0.6V19.6M10 16V19.6M15.4 0.6V3.4M15.4 14V19.6" fill="none" stroke="#bdbdbd" stroke-width="0.7" stroke-linecap="round" stroke-linejoin="round" /><circle cx="10.3" cy="8.6" r="6.5" fill="#2b2b2b" stroke="#e4e4e4" stroke-width="1.1"/><path d="M14.9 13.4L20.2 19.6" fill="none" stroke="#e4e4e4" stroke-width="1.3" stroke-linecap="round" stroke-linejoin="round" /><rect x="7" y="8.6" width="1.3" height="3" fill="none" stroke="#dcdcdc" stroke-width="0.6"/><rect x="9" y="7" width="1.3" height="4.6" fill="none" stroke="#dcdcdc" stroke-width="0.6"/><rect x="11.1" y="5.2" width="1.9" height="6.4" fill="#2f8ff0"/></svg>
<div class="t" style="left:632.10px;top:89.00px;font-size:8.99px;color:#f2f2f2;letter-spacing:-0.400px;">Analyze</div>
<div class="t" style="left:638.30px;top:100.00px;font-size:8.85px;color:#f2f2f2;letter-spacing:-0.400px;">Data</div>
<svg style="left:695.8px;top:120px" width="7.4" height="4.4" viewBox="0 0 7.4 4.4" ><path d="M0.5 3.9L3.7 0.6L6.9 3.9" fill="none" stroke="#d8d8d8" stroke-width="1" stroke-linecap="round" stroke-linejoin="round" /></svg>
<!--formula-->
<div class="a" style="left:0px;top:130px;width:718px;height:49px;background:#19140f"></div>
<div class="a" style="left:4px;top:134.7px;width:72.8px;height:21px;background:#262626;border:1px solid #464646;border-radius:3.5px;box-sizing:border-box"></div>
<div class="t" style="left:7.60px;top:141.00px;font-size:12px;color:#f2f2f2;letter-spacing:0.056px;">C4</div>
<svg style="left:65.39999999999999px;top:143.8px" width="8.4" height="5.4"><path d="M1 1L4.2 4.4L7.4 1" fill="none" stroke="#d8d8d8" stroke-width="0.9" stroke-linecap="round" stroke-linejoin="round"/></svg>
<svg style="left:83.5px;top:141.6px" width="2.2" height="9" viewBox="0 0 2.2 9" ><circle cx="1.1" cy="1.3" r="0.9" fill="#e4e4e4"/><circle cx="1.1" cy="4.4" r="0.9" fill="#e4e4e4"/><circle cx="1.1" cy="7.5" r="0.9" fill="#e4e4e4"/></svg>
<div class="a" style="left:91.3px;top:134.7px;width:62.4px;height:21px;background:#262626;border:1px solid #464646;border-radius:3.5px;box-sizing:border-box"></div>
<svg style="left:96.6px;top:142.2px" width="8.6" height="8.4" viewBox="0 0 8.6 8.4" ><path d="M0.5 0.5L8 7.7M8 0.5L0.5 7.7" fill="none" stroke="#8c8c8c" stroke-width="0.9" stroke-linecap="round" stroke-linejoin="round" /></svg>
<svg style="left:112px;top:142px" width="12.4" height="8.4" viewBox="0 0 12.4 8.4" ><path d="M0.5 4.4L3.9 7.8L11.8 0.6" fill="none" stroke="#8c8c8c" stroke-width="0.9" stroke-linecap="round" stroke-linejoin="round" /></svg>
<div class="t" style="left:130.60px;top:139.00px;font-size:14px;color:#ececec;font-style:italic;font-family:'Liberation Serif',monospace;">f</div>
<div class="t" style="left:135.40px;top:141.00px;font-size:11.4px;color:#ececec;font-style:italic;font-family:'Liberation Serif',monospace;">x</div>
<svg style="left:144.0px;top:143.8px" width="8.4" height="5.4"><path d="M1 1L4.2 4.4L7.4 1" fill="none" stroke="#c8c8c8" stroke-width="0.9" stroke-linecap="round" stroke-linejoin="round"/></svg>
<div class="a" style="left:156.2px;top:134.7px;width:556px;height:39px;background:#262626;border:1px solid #464646;border-radius:3.5px;box-sizing:border-box"></div>
<div class="t" style="left:165.60px;top:141.00px;font-size:12px;color:#f4f4f4;letter-spacing:-0.045px;font-family:'Liberation Mono',monospace;-webkit-text-stroke:0.2px #f4f4f4;">=FINDB(B3,C3,1)</div>
<svg style="left:700.8px;top:142.4px" width="8.4" height="4.8" viewBox="0 0 8.4 4.8" ><path d="M0.5 4.3L4.2 0.6L7.9 4.3" fill="none" stroke="#d8d8d8" stroke-width="1" stroke-linecap="round" stroke-linejoin="round" /></svg>
<!--grid-->
<div class="a" style="left:0px;top:179px;width:703px;height:239.6px;background:#fff"></div>
<div class="a" style="left:0px;top:179px;width:703px;height:16.6px;background:#0a0a0a"></div>
<div class="a" style="left:0px;top:195.6px;width:22.4px;height:223px;background:#0a0a0a"></div>
<svg style="left:0px;top:179px" width="23" height="17" viewBox="0 0 23 17" ><path d="M21 2.2V15.4H6.8Z" fill="#787878"/></svg>
<div class="a" style="left:83.94999999999999px;top:195.6px;width:0.9px;height:223px;background:#e3e3e3"></div>
<div class="a" style="left:83.94999999999999px;top:179px;width:0.9px;height:16.6px;background:#303030"></div>
<div class="a" style="left:144.95px;top:195.6px;width:0.9px;height:223px;background:#e3e3e3"></div>
<div class="a" style="left:144.95px;top:179px;width:0.9px;height:16.6px;background:#303030"></div>
<div class="a" style="left:263.05px;top:195.6px;width:0.9px;height:223px;background:#e3e3e3"></div>
<div class="a" style="left:263.05px;top:179px;width:0.9px;height:16.6px;background:#303030"></div>
<div class="a" style="left:324.85px;top:195.6px;width:0.9px;height:223px;background:#e3e3e3"></div>
<div class="a" style="left:324.85px;top:179px;width:0.9px;height:16.6px;background:#303030"></div>
<div class="a" style="left:386.5px;top:195.6px;width:0.9px;height:223px;background:#e3e3e3"></div>
<div class="a" style="left:386.5px;top:179px;width:0.9px;height:16.6px;background:#303030"></div>
<div class="a" style="left:448.20000000000005px;top:195.6px;width:0.9px;height:223px;background:#e3e3e3"></div>
<div class="a" style="left:448.20000000000005px;top:179px;width:0.9px;height:16.6px;background:#303030"></div>
<div class="a" style="left:510.05px;top:195.6px;width:0.9px;height:223px;background:#e3e3e3"></div>
<div class="a" style="left:510.05px;top:179px;width:0.9px;height:16.6px;background:#303030"></div>
<div class="a" style="left:572.0500000000001px;top:195.6px;width:0.9px;height:223px;background:#e3e3e3"></div>
<div class="a" style="left:572.0500000000001px;top:179px;width:0.9px;height:16.6px;background:#303030"></div>
<div class="a" style="left:633.7px;top:195.6px;width:0.9px;height:223px;background:#e3e3e3"></div>
<div class="a" style="left:633.7px;top:179px;width:0.9px;height:16.6px;background:#303030"></div>
<div class="a" style="left:695.4px;top:195.6px;width:0.9px;height:223px;background:#e3e3e3"></div>
<div class="a" style="left:695.4px;top:179px;width:0.9px;height:16.6px;background:#303030"></div>
<div class="a" style="left:22.4px;top:213.7px;width:680.6px;height:0.9px;background:#eaeaea"></div>
<div class="a" style="left:0px;top:213.7px;width:22.4px;height:0.9px;background:#303030"></div>
<div class="a" style="left:22.4px;top:231.29999999999998px;width:680.6px;height:0.9px;background:#eaeaea"></div>
<div class="a" style="left:0px;top:231.29999999999998px;width:22.4px;height:0.9px;background:#303030"></div>
<div class="a" style="left:22.4px;top:272.70000000000005px;width:680.6px;height:0.9px;background:#eaeaea"></div>
<div class="a" style="left:0px;top:272.70000000000005px;width:22.4px;height:0.9px;background:#303030"></div>
<div class="a" style="left:22.4px;top:290.70000000000005px;width:680.6px;height:0.9px;background:#eaeaea"></div>
<div class="a" style="left:0px;top:290.70000000000005px;width:22.4px;height:0.9px;background:#303030"></div>
<div class="a" style="left:22.4px;top:308.55000000000007px;width:680.6px;height:0.9px;background:#eaeaea"></div>
<div class="a" style="left:0px;top:308.55000000000007px;width:22.4px;height:0.9px;background:#303030"></div>
<div class="a" style="left:22.4px;top:326.40000000000003px;width:680.6px;height:0.9px;background:#eaeaea"></div>
<div class="a" style="left:0px;top:326.40000000000003px;width:22.4px;height:0.9px;background:#303030"></div>
<div class="a" style="left:22.4px;top:344.25000000000006px;width:680.6px;height:0.9px;background:#eaeaea"></div>
<div class="a" style="left:0px;top:344.25000000000006px;width:22.4px;height:0.9px;background:#303030"></div>
<div class="a" style="left:22.4px;top:362.1px;width:680.6px;height:0.9px;background:#eaeaea"></div>
<div class="a" style="left:0px;top:362.1px;width:22.4px;height:0.9px;background:#303030"></div>
<div class="a" style="left:22.4px;top:379.95000000000005px;width:680.6px;height:0.9px;background:#eaeaea"></div>
<div class="a" style="left:0px;top:379.95000000000005px;width:22.4px;height:0.9px;background:#303030"></div>
<div class="a" style="left:22.4px;top:397.80000000000007px;width:680.6px;height:0.9px;background:#eaeaea"></div>
<div class="a" style="left:0px;top:397.80000000000007px;width:22.4px;height:0.9px;background:#303030"></div>
<div class="a" style="left:22.4px;top:415.6500000000001px;width:680.6px;height:0.9px;background:#eaeaea"></div>
<div class="a" style="left:0px;top:415.6500000000001px;width:22.4px;height:0.9px;background:#303030"></div>
<div class="a" style="left:22px;top:179px;width:0.8px;height:16.6px;background:#303030"></div>
<div class="a" style="left:145.6px;top:179px;width:118px;height:15.6px;background:#6c6c6c;border-bottom:1.1px solid #2d9460"></div>
<div class="a" style="left:0px;top:273.5px;width:21.4px;height:17.4px;background:#6c6c6c;border-right:1.1px solid #2d9460"></div>
<div class="t" style="left:23px;top:182.1px;width:60.849999999999994px;font-size:12.4px;text-align:center">A</div>
<div class="t" style="left:84.85px;top:182.1px;width:60.0px;font-size:12.4px;text-align:center">B</div>
<div class="t" style="left:145.85px;top:182.1px;width:117.1px;font-size:12.4px;text-align:center">C</div>
<div class="t" style="left:263.95px;top:182.1px;width:60.80000000000001px;font-size:12.4px;text-align:center">D</div>
<div class="t" style="left:325.75px;top:182.1px;width:60.64999999999998px;font-size:12.4px;text-align:center">E</div>
<div class="t" style="left:387.4px;top:182.1px;width:60.700000000000045px;font-size:12.4px;text-align:center">F</div>
<div class="t" style="left:449.1px;top:182.1px;width:60.849999999999966px;font-size:12.4px;text-align:center">G</div>
<div class="t" style="left:510.95px;top:182.1px;width:61.00000000000006px;font-size:12.4px;text-align:center">H</div>
<div class="t" style="left:572.95px;top:182.1px;width:60.64999999999998px;font-size:12.4px;text-align:center">I</div>
<div class="t" style="left:634.6px;top:182.1px;width:60.69999999999993px;font-size:12.4px;text-align:center">J</div>
<div class="t" style="left:0;top:200.2px;width:21px;font-size:12.2px;text-align:center">1</div>
<div class="t" style="left:0;top:217.8px;width:21px;font-size:12.2px;text-align:center">2</div>
<div class="t" style="left:0;top:259.2px;width:21px;font-size:12.2px;text-align:center">3</div>
<div class="t" style="left:0;top:277.2px;width:21px;font-size:12.2px;text-align:center">4</div>
<div class="t" style="left:0;top:295.1px;width:21px;font-size:12.2px;text-align:center">5</div>
<div class="t" style="left:0;top:312.9px;width:21px;font-size:12.2px;text-align:center">6</div>
<div class="t" style="left:0;top:330.8px;width:21px;font-size:12.2px;text-align:center">7</div>
<div class="t" style="left:0;top:348.6px;width:21px;font-size:12.2px;text-align:center">8</div>
<div class="t" style="left:0;top:366.5px;width:21px;font-size:12.2px;text-align:center">9</div>
<div class="t" style="left:0;top:384.3px;width:21px;font-size:12.2px;text-align:center">10</div>
<div class="t" style="left:0;top:402.2px;width:21px;font-size:12.2px;text-align:center">11</div>
<div class="a" style="left:84.5px;top:214px;width:179.5px;height:18px;background:#ea7533"></div>
<div class="a" style="left:84.5px;top:232px;width:179.5px;height:41.4px;background:#ffc000"></div>
<div class="a" style="left:84.5px;top:231.6px;width:61px;height:41.8px;border:1px solid #5c4a12;box-sizing:border-box"></div>
<div class="a" style="left:84.5px;top:273.2px;width:179.5px;height:18.3px;background:#92d673"></div>
<div class="a" style="left:84.5px;top:272.8px;width:61px;height:18.8px;border:1px solid #45683a;box-sizing:border-box"></div>
<div class="t" style="left:87.00px;top:218.00px;font-size:11.6px;color:#0c0c0c;letter-spacing:-0.038px;transform:scaleY(1.06);transform-origin:0 85%;-webkit-text-stroke:0.18px #0c0c0c;">Find_text</div>
<div class="t" style="left:148.60px;top:218.00px;font-size:11.6px;color:#0c0c0c;letter-spacing:0.144px;transform:scaleY(1.06);transform-origin:0 85%;-webkit-text-stroke:0.18px #0c0c0c;">Within_text</div>
<div class="t" style="left:87.00px;top:259.00px;font-size:11.6px;color:#0c0c0c;transform:scaleY(1.06);transform-origin:0 85%;-webkit-text-stroke:0.18px #0c0c0c;">Z</div>
<div class="t" style="left:152.40px;top:241.00px;font-size:11.6px;color:#0c0c0c;letter-spacing:-0.201px;transform:scaleY(1.06);transform-origin:0 85%;-webkit-text-stroke:0.18px #0c0c0c;">FINDBFUNCTION in</div>
<div class="t" style="left:154.20px;top:259.00px;font-size:11.6px;color:#0c0c0c;letter-spacing:-0.201px;transform:scaleY(1.06);transform-origin:0 85%;-webkit-text-stroke:0.18px #0c0c0c;">Excel TEXT function</div>
<div class="t" style="left:87.00px;top:278.00px;font-size:11.5px;color:#0a0a0a;letter-spacing:-0.400px;font-weight:bold;">Formu</div>
<div class="a" style="left:122px;top:273.9px;width:13.8px;height:13.8px;background:#3a3a3c"></div>
<svg style="left:122px;top:273.9px" width="13.8" height="13.8" viewBox="0 0 13.8 13.8" ><path d="M6.9 1.6L12.6 11.8H1.2Z" fill="#f2a33c" stroke="#f6c98a" stroke-width="0.5" stroke-linejoin="round"/><rect x="6.4" y="5" width="1" height="3.8" fill="#4a3010"/><rect x="6.4" y="9.6" width="1" height="1" fill="#4a3010"/></svg>
<div class="a" style="left:145.6px;top:272.8px;width:119.2px;height:19.3px;border:1.5px solid #1e6a3c;box-sizing:border-box"></div>
<div class="a" style="left:147.1px;top:274.3px;width:116.2px;height:16.3px;border:0.8px solid #d4f0c4;box-sizing:border-box;opacity:.55"></div>
<svg style="left:147.4px;top:274px" width="4" height="4" viewBox="0 0 4 4" ><path d="M0 0H2.8L0 2.8Z" fill="#1f7a3f"/></svg>
<div class="a" style="left:148.6px;top:289.6px;width:1px;height:1.6px;background:#223"></div>
<div class="a" style="left:261.8px;top:289.8px;width:2.6px;height:2.6px;background:#1e6a3c;border:0.5px solid #fff"></div>
<div class="t" style="left:184.30px;top:280.00px;font-size:9.8px;color:#111;font-weight:bold;">#VALUE!</div>
<div class="a" style="left:175.6px;top:270px;width:63.4px;height:28.4px;border:2.6px solid #e8212a;box-sizing:border-box"></div>
<div class="a" style="left:703px;top:179px;width:16px;height:239.6px;background:#141414"></div>
<svg style="left:706.6px;top:182.2px" width="8" height="5.4" viewBox="0 0 8 5.4" ><path d="M0.3 5.1L4 0.3L7.7 5.1Z" fill="#b4b4b4"/></svg>
<div class="a" style="left:707.7px;top:191.2px;width:5.3px;height:115.8px;background:#9c9c9c;border-radius:2.6px"></div>
<svg style="left:706.6px;top:410.8px" width="8" height="5.4" viewBox="0 0 8 5.4" ><path d="M0.3 0.3L4 5.1L7.7 0.3Z" fill="#b4b4b4"/></svg>
<!--tabs-->
<div class="a" style="left:0px;top:418.6px;width:718px;height:23.4px;background:#121310"></div>
<svg style="left:14.6px;top:426.2px" width="5" height="7" viewBox="0 0 5 7" ><path d="M4.4 0.4L0.7 3.5L4.4 6.6" fill="none" stroke="#dcdcdc" stroke-width="1.1" stroke-linecap="round" stroke-linejoin="round" /></svg>
<svg style="left:38.2px;top:426.2px" width="5" height="7" viewBox="0 0 5 7" ><path d="M0.6 0.4L4.3 3.5L0.6 6.6" fill="none" stroke="#b8b8b8" stroke-width="1.1" stroke-linecap="round" stroke-linejoin="round" /></svg>
<svg style="left:59.2px;top:428.9px" width="8.4" height="2" viewBox="0 0 8.4 2" ><circle cx="1" cy="1" r="1" fill="#ececec"/><circle cx="4.1" cy="1" r="1" fill="#ececec"/><circle cx="7.2" cy="1" r="1" fill="#ececec"/></svg>
<div class="t" style="left:86.20px;top:427.00px;font-size:10px;color:#ececec;letter-spacing:0.031px;">Code function example 2</div>
<div class="a" style="left:207.3px;top:423.4px;width:0.9px;height:13px;background:#5a5a5a"></div>
<div class="t" style="left:217.30px;top:427.00px;font-size:10px;color:#ececec;letter-spacing:-0.341px;">Sheet3</div>
<div class="a" style="left:256.3px;top:423.4px;width:0.9px;height:13px;background:#5a5a5a"></div>
<div class="a" style="left:260.4px;top:418.6px;width:41.6px;height:20px;background:#fff;border-radius:0 0 4px 4px"></div>
<div class="a" style="left:257.4px;top:418.6px;width:3px;height:3px;background:radial-gradient(circle at 0 100%,#121310 2.5px,#fff 3.1px)"></div>
<div class="a" style="left:302px;top:418.6px;width:3px;height:3px;background:radial-gradient(circle at 100% 100%,#121310 2.5px,#fff 3.1px)"></div>
<div class="t" style="left:266.20px;top:424.00px;font-size:10px;color:#151515;letter-spacing:-0.421px;-webkit-text-stroke:0.3px #151515;">Sheet1</div>
<div class="a" style="left:266px;top:435px;width:29.6px;height:1.3px;background:#1e8a4c"></div>
<div class="a" style="left:303.8px;top:423.4px;width:0.9px;height:13px;background:#5a5a5a"></div>
<svg style="left:335px;top:425.2px" width="9" height="9" viewBox="0 0 9 9" ><path d="M4.4 0.4V8.4M0.4 4.4H8.4" fill="none" stroke="#d0d0d0" stroke-width="0.9" stroke-linecap="round" stroke-linejoin="round" /></svg>
<svg style="left:431.4px;top:426.6px" width="2.2" height="8.4" viewBox="0 0 2.2 8.4" ><circle cx="1.1" cy="1.2" r="0.9" fill="#efefef"/><circle cx="1.1" cy="4.1" r="0.9" fill="#efefef"/><circle cx="1.1" cy="7" r="0.9" fill="#efefef"/></svg>
<svg style="left:447.4px;top:426.4px" width="5.6" height="7.4" viewBox="0 0 5.6 7.4" ><path d="M5.2 0.2L0.3 3.7L5.2 7.2Z" fill="#bdbdbd"/></svg>
<div class="a" style="left:456.4px;top:427px;width:216px;height:6px;background:#a4a4a4;border-radius:3px"></div>
<svg style="left:695.2px;top:426.4px" width="6" height="7.4" viewBox="0 0 6 7.4" ><path d="M0.4 0.2L5.5 3.7L0.4 7.2Z" fill="#a2a2a2"/></svg>
<!--status-->
<div class="a" style="left:0px;top:442px;width:718px;height:16px;background:#131313"></div>
<div class="t" style="left:6.80px;top:447.00px;font-size:7.44px;color:#e0e0e0;letter-spacing:-0.400px;">Ready</div>
<svg style="left:40px;top:445.6px" width="11" height="9.4" viewBox="0 0 11 9.4" ><rect x="0.2" y="0.2" width="10.4" height="1.7" fill="#e8e8e8"/><path d="M0.7 1V8.6H2.4M3.3 3.4V8.6" fill="none" stroke="#e0e0e0" stroke-width="1" stroke-linecap="round" stroke-linejoin="round" /><circle cx="7.7" cy="6" r="2.7" fill="none" stroke="#e8e8e8" stroke-width="1.1"/><circle cx="7.7" cy="6" r="1.1" fill="#e8e8e8"/></svg>
<svg style="left:62.6px;top:444.6px" width="10.8" height="10.6" viewBox="0 0 10.8 10.6" ><circle cx="4.4" cy="1.5" r="1.1" fill="none" stroke="#ececec" stroke-width="0.9"/><path d="M0.6 3.6L4.4 4.5L8.2 3.6M4.4 4.5V6.6L2.4 10.2M4.4 6.6L5.3 8" fill="none" stroke="#ececec" stroke-width="1.05" stroke-linecap="round" stroke-linejoin="round" /><path d="M6.2 6.6L10.2 10.2M10.2 6.6L6.2 10.2" fill="none" stroke="#ececec" stroke-width="1.05" stroke-linecap="round" stroke-linejoin="round" /></svg>
<div class="t" style="left:75.80px;top:447.00px;font-size:7.6px;color:#f4f4f4;letter-spacing:-0.034px;font-weight:bold;">Accessibility: Investigate</div>
<div class="a" style="left:494.6px;top:442.6px;width:29.2px;height:15px;background:#282828"></div>
<svg style="left:503.6px;top:444.4px" width="10.6" height="10" viewBox="0 0 10.6 10" ><rect x="0.5" y="0.5" width="9.6" height="9" fill="none" stroke="#e4e4e4" stroke-width="0.9"/><path d="M0.6 3.5H10M0.6 6.5H10M3.7 0.6V9.4M6.9 0.6V9.4" fill="none" stroke="#e4e4e4" stroke-width="0.9" stroke-linecap="round" stroke-linejoin="round" /></svg>
<svg style="left:533.2px;top:444.6px" width="10.4" height="10.2" viewBox="0 0 10.4 10.2" ><rect x="0.5" y="0.5" width="9.4" height="9.2" fill="none" stroke="#e0e0e0" stroke-width="0.9"/><rect x="2.6" y="2.6" width="5.2" height="5" fill="none" stroke="#e0e0e0" stroke-width="0.8"/><rect x="4" y="4" width="2.4" height="2.2" fill="#bbb"/></svg>
<svg style="left:562.2px;top:444.6px" width="10.4" height="10.2" viewBox="0 0 10.4 10.2" ><rect x="0.5" y="0.5" width="9.4" height="9.2" fill="none" stroke="#e0e0e0" stroke-width="0.9"/><path d="M3.4 0.6V5.6H9.8M6.8 0.6V5.4" fill="none" stroke="#e0e0e0" stroke-width="0.8" stroke-linecap="round" stroke-linejoin="round" /></svg>
<div class="a" style="left:585px;top:449.1px;width:5.6px;height:1.1px;background:#bdbdbd"></div>
<div class="a" style="left:595px;top:448.9px;width:70.8px;height:1.5px;background:#8c8c8c;border-radius:1px"></div>
<div class="a" style="left:629px;top:445.6px;width:4.2px;height:8.4px;background:#c4c4c4;border-radius:1px"></div>
<svg style="left:670px;top:446.6px" width="6.4" height="6.4" viewBox="0 0 6.4 6.4" ><path d="M3.2 0.3V6.1M0.3 3.2H6.1" fill="none" stroke="#b0b0b0" stroke-width="1" stroke-linecap="round" stroke-linejoin="round" /></svg>
<div class="t" style="left:685.50px;top:447.00px;font-size:7.6px;color:#e8e8e8;letter-spacing:-0.246px;">100%</div>
</div></div>
<div class="a" style="left:331.7px;top:-29px;width:32px;height:32px;background:#c43c35;border-radius:16px"></div>
<div class="a" style="left:0px;top:459.4px;width:720px;height:4.6px;background:#121212"></div>
<div class="a" style="left:35.6px;top:457.7px;width:589.6px;height:2.4px;background:#a6a6a6"></div>
<div class="a" style="left:35.6px;top:460.1px;width:589.6px;height:1.1px;background:#030303"></div>
<div class="a" style="left:607.5px;top:460.3px;width:26.5px;height:3.7px;background:#272727"></div>
<div class="a" style="left:37px;top:462.4px;width:3.5px;height:1.6px;background:#777"></div>
<div class="a" style="left:42px;top:462.4px;width:4px;height:1.6px;background:#777"></div>
<div class="a" style="left:537px;top:462.4px;width:2px;height:1.6px;background:#777"></div>
<div class="a" style="left:543px;top:462.4px;width:2px;height:1.6px;background:#777"></div>
<div class="a" style="left:587px;top:462.4px;width:8px;height:1.6px;background:#777"></div>
<div class="a" style="left:617px;top:462.4px;width:8px;height:1.6px;background:#777"></div>
<div class="a" style="left:644px;top:462.4px;width:8px;height:1.6px;background:#777"></div>
</body>
</html>
